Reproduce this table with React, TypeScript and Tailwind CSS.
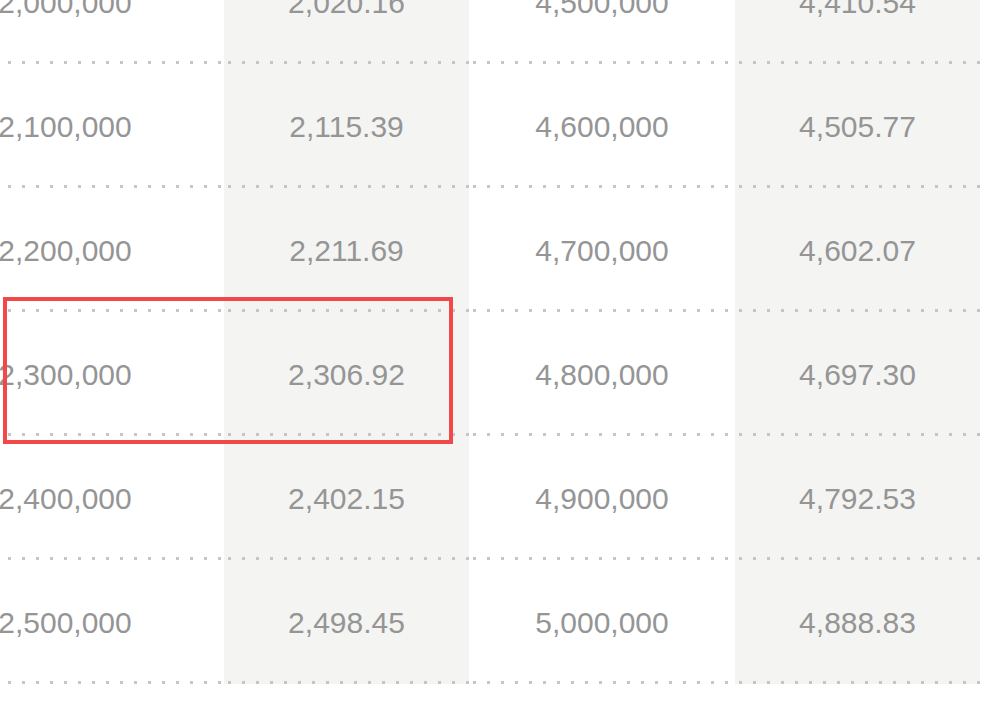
import React from 'react';

const rows = [
  ['2,000,000', '2,020.16', '4,500,000', '4,410.54'],
  ['2,100,000', '2,115.39', '4,600,000', '4,505.77'],
  ['2,200,000', '2,211.69', '4,700,000', '4,602.07'],
  ['2,300,000', '2,306.92', '4,800,000', '4,697.30'],
  ['2,400,000', '2,402.15', '4,900,000', '4,792.53'],
  ['2,500,000', '2,498.45', '5,000,000', '4,888.83'],
];

const shaded = [false, true, false, true];

function Cell({ value, gray }: { value: string; gray: boolean }) {
  return (
    <div className={`flex h-[124px] flex-col ${gray ? 'bg-[#f4f4f3]' : 'bg-white'}`}>
      <div className="flex flex-1 items-center justify-center pt-[3px]">{value}</div>
      <div className="h-[3px] bg-[linear-gradient(to_right,#c6c6c6_3px,transparent_3px)] bg-[length:14px_3px] bg-repeat-x bg-[position:4px_0]" />
    </div>
  );
}

export default function App() {
  return (
    <div className="relative h-[710px] w-[994px] overflow-hidden bg-white font-['Liberation_Sans',Arial,sans-serif] text-[30px] text-[#959595]">
      <div className="-mt-[60px] -ml-[94px] grid grid-cols-[318px_245px_266px_245px]">
        {rows.map((row, i) => (
          <React.Fragment key={i}>
            {row.map((v, j) => (
              <Cell key={j} value={v} gray={shaded[j]} />
            ))}
          </React.Fragment>
        ))}
      </div>
      <div className="absolute left-[3px] top-[297px] h-[147px] w-[450px] border-[4px] border-[#f2484a]" />
    </div>
  );
}
